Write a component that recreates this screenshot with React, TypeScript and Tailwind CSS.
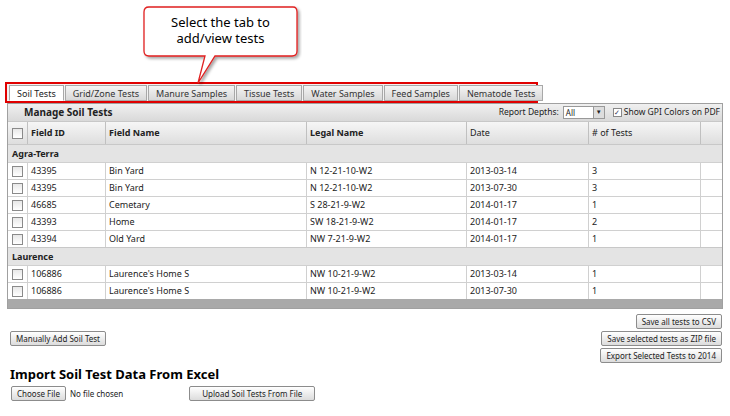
import React from 'react';

const tabs = ['Soil Tests', 'Grid/Zone Tests', 'Manure Samples', 'Tissue Tests', 'Water Samples', 'Feed Samples', 'Nematode Tests'];

type Row = { id: string; name: string; legal: string; date: string; n: string };
const groups: { name: string; rows: Row[] }[] = [
  {
    name: 'Agra-Terra',
    rows: [
      { id: '43395', name: 'Bin Yard', legal: 'N 12-21-10-W2', date: '2013-03-14', n: '3' },
      { id: '43395', name: 'Bin Yard', legal: 'N 12-21-10-W2', date: '2013-07-30', n: '3' },
      { id: '46685', name: 'Cemetary', legal: 'S 28-21-9-W2', date: '2014-01-17', n: '1' },
      { id: '43393', name: 'Home', legal: 'SW 18-21-9-W2', date: '2014-01-17', n: '2' },
      { id: '43394', name: 'Old Yard', legal: 'NW 7-21-9-W2', date: '2014-01-17', n: '1' },
    ],
  },
  {
    name: 'Laurence',
    rows: [
      { id: '106886', name: "Laurence's Home S", legal: 'NW 10-21-9-W2', date: '2013-03-14', n: '1' },
      { id: '106886', name: "Laurence's Home S", legal: 'NW 10-21-9-W2', date: '2013-07-30', n: '1' },
    ],
  },
];

const cols = 'grid grid-cols-[20px_78px_201px_160px_122px_112px_1fr]';
const Box = () => <span className="inline-block w-[11px] h-[11px] border border-[#8a8a8a] bg-gradient-to-b from-[#e8e8e8] to-white" />;
const Btn = ({ children, className = '' }: { children: React.ReactNode; className?: string }) => (
  <button className={`h-[15px] px-[5px] text-[8px] leading-none whitespace-nowrap border border-[#8c8c8c] rounded-[2px] bg-gradient-to-b from-white to-[#dcdcdc] text-[#222] font-['Liberation_Sans',sans-serif] ${className}`}>{children}</button>
);

export default function App() {
  return (
    <div className="relative w-[730px] h-[416px] bg-white text-[9px] text-[#222] font-['Liberation_Sans',sans-serif]">
      {/* callout */}
      <div className="absolute left-[140px] top-[4px] w-[162px] h-[82px]">
        <svg width="162" height="82" className="absolute inset-0">
          <defs>
            <filter id="sh" x="-10%" y="-10%" width="130%" height="140%">
              <feDropShadow dx="2" dy="2" stdDeviation="1.5" floodColor="#000" floodOpacity="0.35" />
            </filter>
          </defs>
          <path d="M9 3 H153 Q157 3 157 8 V47 Q157 52 152 52 H75 L58 79 L65 52 H9 Q4 52 4 47 V8 Q4 3 9 3 Z" fill="#fff" stroke="#e02020" strokeWidth="1.3" filter="url(#sh)" />
        </svg>
        <div className="absolute left-[4px] top-[10px] w-[153px] text-center text-[13px] leading-[16px] text-black">Select the tab to<br />add/view tests</div>
      </div>

      <div className="pt-[82px] pl-[5px]">
        <div className="flex w-[533px] h-[21px] border-2 border-[#e00000] px-[2px] pt-[1px] gap-[1px] bg-[#f2f2f2]">
          {tabs.map((t, i) => (
            <div key={t} className={`whitespace-nowrap px-[7px] text-[9px] leading-[16px] border border-[#a8a8a8] ${i === 0 ? 'bg-white border-b-white' : 'bg-gradient-to-b from-[#f4f4f4] to-[#d8d8d8] text-[#333]'}`}>{t}</div>
          ))}
        </div>
      </div>

      <div className="ml-[7px] w-[716px] border border-[#a0a0a0] bg-[#f3f3f3]">
        <div className="flex items-center h-[17px] bg-gradient-to-b from-[#f0f0f0] to-[#d9d9d9] pl-[16px] pr-[2px]">
          <span className="font-bold text-[10px]">Manage Soil Tests</span>
          <span className="ml-auto mr-[4px] text-[8.5px]">Report Depths:</span>
          <span className="flex items-center w-[42px] h-[13px] border border-[#999] bg-white text-[8px] pl-[2px]">All<span className="ml-auto w-[11px] h-[11px] bg-[#ddd] border-l border-[#999] flex items-center justify-center text-[6px]">▼</span></span>
          <span className="ml-[8px] flex items-center gap-[2px] text-[8.5px] whitespace-nowrap"><span className="w-[9px] h-[9px] border border-[#888] bg-white text-[7px] leading-[8px] text-[#335] text-center">✓</span>Show GPI Colors on PDF</span>
        </div>
        <div className={`${cols} h-[23px] bg-gradient-to-b from-[#f6f6f6] to-[#dedede] border-t border-[#c8c8c8] font-bold text-[9px]`}>
          <div className="flex items-center justify-center border-r border-[#c0c0c0]"><Box /></div>
          {['Field ID', 'Field Name', 'Legal Name', 'Date', '# of Tests', ''].map((h, i) => (
            <div key={i} className={`flex items-center px-[3px] ${i < 5 ? 'border-r border-[#c0c0c0]' : ''} ${i > 2 ? 'font-normal' : ''}`}>{h}</div>
          ))}
        </div>
        {groups.map(g => (
          <div key={g.name}>
            <div className="h-[18px] flex items-center px-[4px] bg-[#e4e4e4] border-t border-[#c8c8c8] font-bold text-[9px]">{g.name}</div>
            {g.rows.map((r, i) => (
              <div key={i} className={`${cols} h-[17px] bg-white border-t border-[#d0d0d0]`}>
                <div className="flex items-center justify-center border-r border-[#d0d0d0]"><Box /></div>
                {[r.id, r.name, r.legal, r.date, r.n, ''].map((c, j) => (
                  <div key={j} className={`flex items-center px-[3px] ${j < 5 ? 'border-r border-[#d0d0d0]' : ''}`}>{c}</div>
                ))}
              </div>
            ))}
          </div>
        ))}
        <div className="h-[9px] bg-[#a9a9a9]" />
      </div>

      <div className="flex justify-between w-[722px] pl-[10px] mt-[5px]">
        <Btn className="mt-[17px]">Manually Add Soil Test</Btn>
        <div className="flex flex-col items-end gap-[2px]">
          <Btn>Save all tests to CSV</Btn>
          <Btn>Save selected tests as ZIP file</Btn>
          <Btn>Export Selected Tests to 2014</Btn>
        </div>
      </div>

      <div className="pl-[10px] mt-[3px] font-['DejaVu_Sans_Condensed',sans-serif] font-bold text-[13px] leading-[16px] text-black">Import Soil Test Data From Excel</div>
      <div className="flex items-center pl-[11px] mt-[4px] text-[8px]">
        <Btn>Choose File</Btn>
        <span className="ml-[4px]">No file chosen</span>
        <Btn className="ml-[66px] w-[126px]">Upload Soil Tests From File</Btn>
      </div>
    </div>
  );
}
